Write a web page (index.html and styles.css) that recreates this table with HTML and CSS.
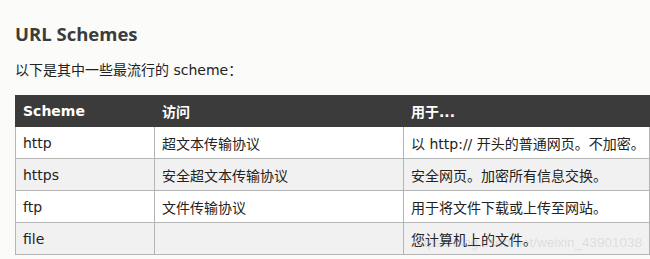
FILE: index.html
```html
<!DOCTYPE html>
<html lang="zh">
<head>
<meta charset="utf-8">
<link rel="stylesheet" href="styles.css">
</head>
<body>
<main class="page">
  <h2 class="title">URL Schemes</h2>
  <p class="intro">以下是其中一些最流行的 scheme：</p>
  <div class="table-wrap">
    <table class="schemes">
      <colgroup>
        <col class="c1"><col class="c2"><col class="c3">
      </colgroup>
      <thead>
        <tr><th>Scheme</th><th>访问</th><th>用于...</th></tr>
      </thead>
      <tbody>
        <tr><td>http</td><td>超文本传输协议</td><td>以 http:// 开头的普通网页。不加密。</td></tr>
        <tr class="alt"><td>https</td><td>安全超文本传输协议</td><td>安全网页。加密所有信息交换。</td></tr>
        <tr><td>ftp</td><td>文件传输协议</td><td>用于将文件下载或上传至网站。</td></tr>
        <tr class="alt"><td>file</td><td></td><td>您计算机上的文件。</td></tr>
      </tbody>
    </table>
    <span class="watermark">https://blog.csdn.net/weixin_43901038</span>
  </div>
</main>
</body>
</html>
```

FILE: styles.css
```css
html, body {
  margin: 0;
  padding: 0;
  overflow: hidden;
  background: #fbfbf9;
}
.page {
  padding: 21px 0 0 15px;
  font-family: "DejaVu Sans", Verdana, "Noto Sans CJK SC", sans-serif;
  color: #222;
}
.title {
  margin: 0;
  font-family: "Open Sans", "DejaVu Sans", sans-serif;
  font-weight: 700;
  font-size: 18.5px;
  line-height: 26px;
  color: #3c3c3c;
}
.intro {
  margin: 13px 0 0;
  font-size: 14px;
  line-height: 20px;
  font-family: "DejaVu Sans", "Noto Sans CJK SC", sans-serif;
}
.table-wrap {
  position: relative;
  margin-top: 15px;
  width: 634px;
}
.schemes {
  border-collapse: collapse;
  table-layout: fixed;
  width: 634px;
  font-size: 14px;
  font-family: "DejaVu Sans", "Noto Sans CJK SC", sans-serif;
}
.c1 { width: 139px; }
.c2 { width: 249px; }
.c3 { width: 246px; }
.schemes th {
  background: #3b3b3b;
  color: #fff;
  text-align: left;
  font-weight: 700;
  height: 31px;
  padding: 0 0 0 7px;
  border: 1px solid #3b3b3b;
  box-sizing: border-box;
  white-space: nowrap;
}
.schemes td {
  height: 32px;
  padding: 0 0 0 7px;
  border: 1px solid #b4b4b4;
  box-sizing: border-box;
  background: #fff;
  white-space: nowrap;
  overflow: hidden;
}
.schemes tr.alt td {
  background: #f1f1f1;
}
.watermark {
  position: absolute;
  right: 7px;
  bottom: 5px;
  font-family: "Liberation Sans", sans-serif;
  font-size: 13.5px;
  color: rgba(170,170,170,0.3);
}
```
